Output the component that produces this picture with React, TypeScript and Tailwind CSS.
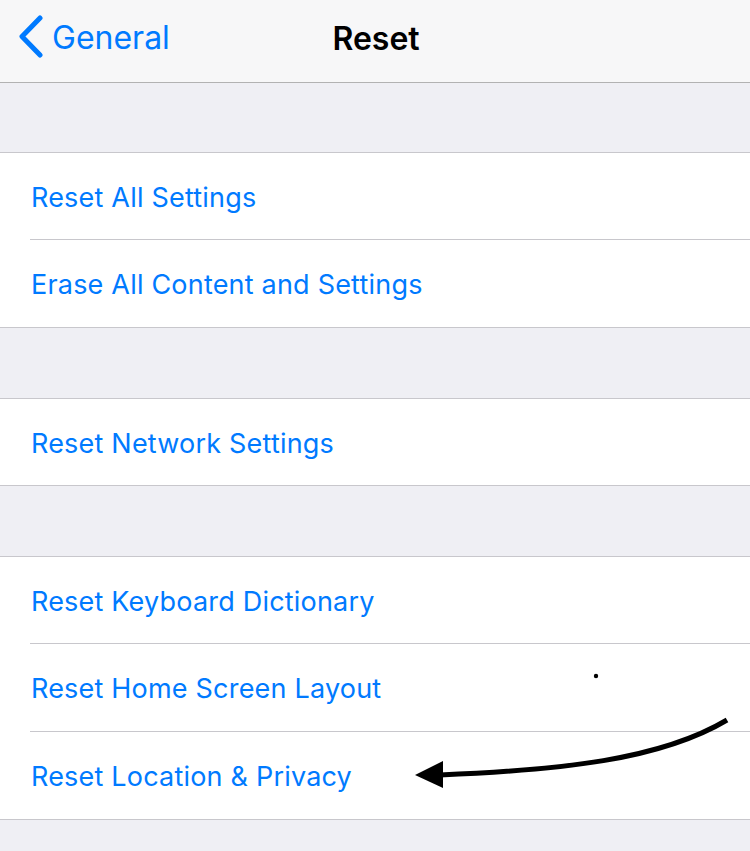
import React from "react";

const font = { fontFamily: "Inter, 'Noto Sans', sans-serif" };

function Row({ label, first, last }: { label: string; first?: boolean; last?: boolean }) {
  return (
    <div className="flex flex-col">
      <div
        className={
          (first ? "h-[86px] " : "h-[87px] ") +
          "flex items-center pl-[31px] pt-[4px] text-[27px] text-[#007aff] tracking-[0.2px]"
        }
      >
        {label}
      </div>
      {!last && <div className="ml-[30px] h-px bg-[#c8c7cc]" />}
    </div>
  );
}

function Group({ items }: { items: string[] }) {
  return (
    <div className="bg-white border-y border-[#c8c7cc]">
      {items.map((l, i) => (
        <Row key={l} label={l} first={i === 0} last={i === items.length - 1} />
      ))}
    </div>
  );
}

export default function App() {
  return (
    <div className="w-[750px] h-[851px] bg-[#efeff4] overflow-hidden relative" style={font}>
      <div className="h-[83px] bg-[#f7f7f8] border-b border-[#b2b2b2] relative flex items-center pb-[8px]">
        <div className="flex items-center pl-[16px] gap-[8px] text-[#007aff]">
          <svg width="28" height="44" viewBox="0 0 28 44">
            <path d="M24 3 L6 21.5 L24 40" fill="none" stroke="#007aff" strokeWidth="5" strokeLinecap="round" strokeLinejoin="round" />
          </svg>
          <span className="text-[32px] leading-none pt-[1px]">General</span>
        </div>
        <div className="absolute left-0 right-0 top-[23px] text-center text-[32px] font-semibold text-black leading-none pl-[2px]">
          Reset
        </div>
      </div>
      <div className="h-[69px]" />
      <Group items={["Reset All Settings", "Erase All Content and Settings"]} />
      <div className="h-[70px]" />
      <Group items={["Reset Network Settings"]} />
      <div className="h-[70px]" />
      <Group items={["Reset Keyboard Dictionary", "Reset Home Screen Layout", "Reset Location & Privacy"]} />
      <svg className="absolute left-0 top-0 pointer-events-none" width="750" height="851">
        <circle cx="596" cy="676" r="2.2" fill="#000" />
        <path d="M727 720 C 660 760, 560 770, 440 775" fill="none" stroke="#000" strokeWidth="5" />
        <polygon points="415,775 443,761 443,788" fill="#000" />
      </svg>
    </div>
  );
}
